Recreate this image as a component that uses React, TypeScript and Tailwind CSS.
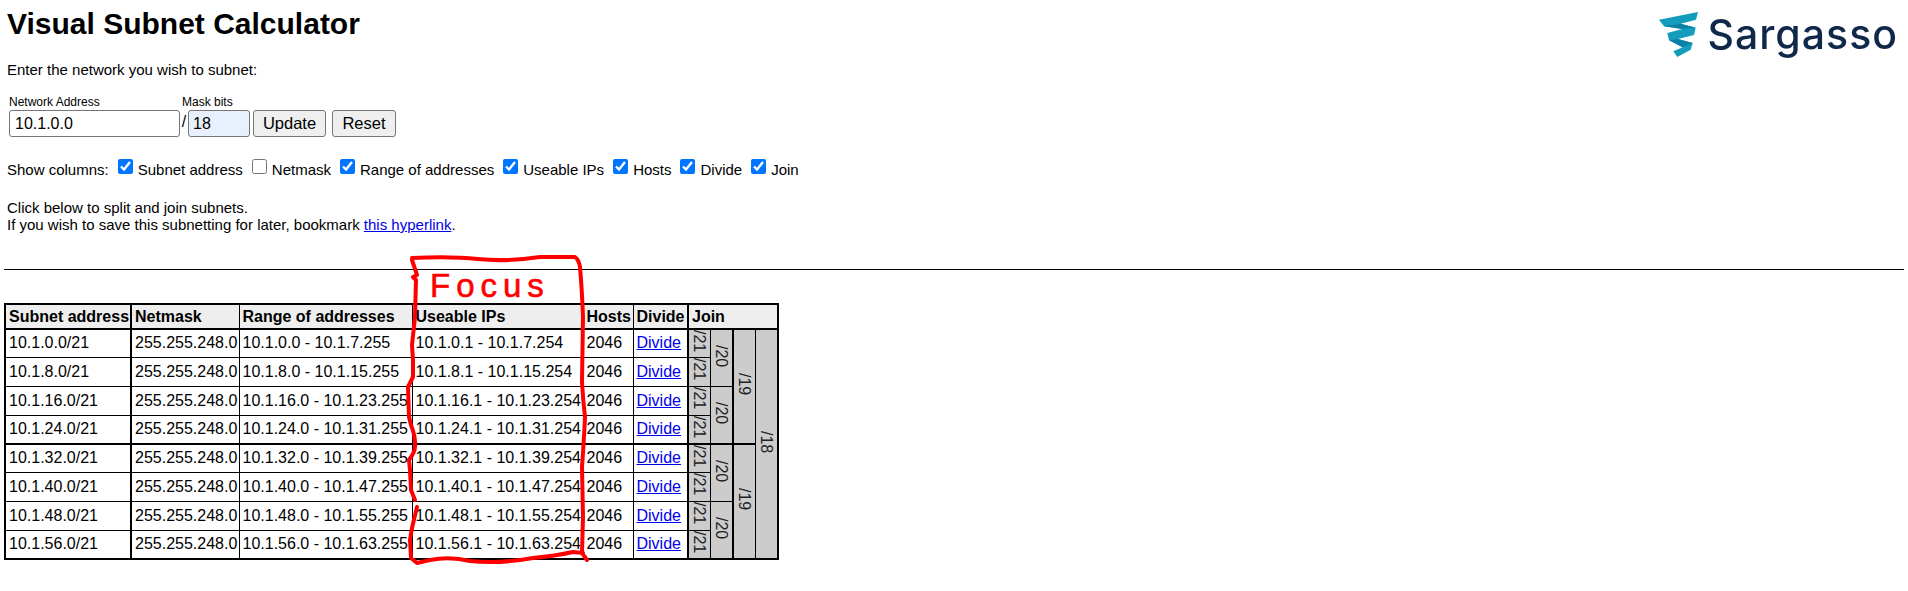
const rows = [
  ["10.1.0.0/21", "10.1.0.0 - 10.1.7.255", "10.1.0.1 - 10.1.7.254"],
  ["10.1.8.0/21", "10.1.8.0 - 10.1.15.255", "10.1.8.1 - 10.1.15.254"],
  ["10.1.16.0/21", "10.1.16.0 - 10.1.23.255", "10.1.16.1 - 10.1.23.254"],
  ["10.1.24.0/21", "10.1.24.0 - 10.1.31.255", "10.1.24.1 - 10.1.31.254"],
  ["10.1.32.0/21", "10.1.32.0 - 10.1.39.255", "10.1.32.1 - 10.1.39.254"],
  ["10.1.40.0/21", "10.1.40.0 - 10.1.47.255", "10.1.40.1 - 10.1.47.254"],
  ["10.1.48.0/21", "10.1.48.0 - 10.1.55.255", "10.1.48.1 - 10.1.55.254"],
  ["10.1.56.0/21", "10.1.56.0 - 10.1.63.255", "10.1.56.1 - 10.1.63.254"],
];

const columns: [string, boolean][] = [
  ["Subnet address", true],
  ["Netmask", false],
  ["Range of addresses", true],
  ["Useable IPs", true],
  ["Hosts", true],
  ["Divide", true],
  ["Join", true],
];

function Join({ label, span, thickRight, thickBottom }: { label: string; span: number; thickRight?: boolean; thickBottom?: boolean }) {
  return (
    <td
      rowSpan={span}
      className={`bg-[#cccccc] border-y border-l border-black p-0 text-center align-middle text-[#222222] ${thickRight ? "border-r-2" : "border-r"} ${thickBottom ? "border-b-2" : ""}`}
    >
      <span className="inline-block [writing-mode:vertical-rl] leading-[20px]">{label}</span>
    </td>
  );
}

function Logo() {
  return (
    <div className="flex items-start gap-[9px] mt-[11px] mr-[6px] blur-[0.4px]">
      <svg width="41" height="49" viewBox="52 34 123 147" aria-hidden="true">
        <polygon points="55,60 172,37 166,60 120,72 165,84 160,106 112,118 156,130 150,150 110,172 98,155 126,143 85,122 80,100 125,88 70,80" fill="#149cbc" />
        <polygon points="70,80 120,72 165,84 125,88" fill="#0a80a5" />
        <polygon points="85,122 112,118 156,130 126,143" fill="#0a80a5" />
      </svg>
      <span className="font-['Inter','Noto_Sans',sans-serif] text-[41px] leading-[46px] font-medium text-[#10284a] tracking-[1px]">Sargasso</span>
    </div>
  );
}

export default function App() {
  return (
    <div className="relative min-h-[591px] bg-white px-[4px] font-['Liberation_Sans',Arial,sans-serif] text-black overflow-hidden">
      <div className="flex justify-between items-start h-[60px]">
        <h1 className="ml-[3px] mt-[6px] text-[30px] leading-[36px] font-bold">Visual Subnet Calculator</h1>
        <Logo />
      </div>

      <p className="ml-[3px] mt-[1px] text-[15px] leading-[17px]">Enter the network you wish to subnet:</p>

      <form className="mt-[17px] ml-[5px] flex items-end">
        <div className="flex flex-col">
          <label className="text-[12px] leading-[14px] mb-[1px]">Network Address</label>
          <input defaultValue="10.1.0.0" className="w-[171px] h-[27px] border border-[#767676] rounded-[3px] px-[5px] text-[16px] outline-none" />
        </div>
        <span className="w-[8px] h-[27px] text-[16px] leading-[24px] text-center">/</span>
        <div className="flex flex-col">
          <label className="text-[12px] leading-[14px] mb-[1px] -ml-[6px]">Mask bits</label>
          <input defaultValue="18" className="w-[62px] h-[27px] border border-[#767676] rounded-[3px] px-[4px] text-[16px] bg-[#e8f0fe] outline-none" />
        </div>
        <button type="button" className="ml-[3px] w-[73px] h-[27px] bg-[#efefef] border border-[#767676] rounded-[3px] text-[16.5px]">Update</button>
        <button type="button" className="ml-[6px] w-[64px] h-[27px] bg-[#efefef] border border-[#767676] rounded-[3px] text-[16.5px]">Reset</button>
      </form>

      <div className="ml-[3px] mt-[22px] flex items-center h-[20px] text-[15px] leading-[17px]">
        <span className="mr-[9px]">Show columns:</span>
        {columns.map(([name, checked]) => (
          <label key={name} className="flex items-center mr-[9px]">
            <input type="checkbox" defaultChecked={checked} className="w-[15px] h-[15px] m-0 mr-[5px] -mt-[5px]" />
            {name}
          </label>
        ))}
      </div>

      <p className="ml-[3px] mt-[20px] text-[15px] leading-[17px]">
        Click below to split and join subnets.
        <br />
        If you wish to save this subnetting for later, bookmark <a href="#" className="text-[#0000ee] underline">this hyperlink</a>.
      </p>

      <hr className="mt-[36px] border-0 border-t border-black" />

      <table className="mt-[33px] table-fixed w-[773px] border-collapse border-2 border-black text-[16px] leading-[18px]">
        <colgroup>
          <col className="w-[126px]" />
          <col className="w-[108px]" />
          <col className="w-[173px]" />
          <col className="w-[171px]" />
          <col className="w-[50px]" />
          <col className="w-[55px]" />
          <col className="w-[22px]" />
          <col className="w-[23px]" />
          <col className="w-[22px]" />
          <col className="w-[23px]" />
        </colgroup>
        <thead>
          <tr className="h-[25px] bg-[#eeeeee] font-bold">
            <th className="border border-r-2 border-b-2 border-black px-[3px] p-0 text-left whitespace-nowrap font-bold">Subnet address</th>
            <th className="border border-b-2 border-black px-[3px] text-left font-bold">Netmask</th>
            <th className="border border-b-2 border-black px-[3px] text-left font-bold">Range of addresses</th>
            <th className="border border-b-2 border-black px-[3px] text-left font-bold">Useable IPs</th>
            <th className="border border-b-2 border-black px-[3px] text-left font-bold">Hosts</th>
            <th className="border border-r-2 border-b-2 border-black px-[3px] text-left font-bold">Divide</th>
            <th colSpan={4} className="border border-b-2 border-black px-[3px] text-left font-bold">Join</th>
          </tr>
        </thead>
        <tbody>
          {rows.map(([subnet, range, usable], i) => (
            <tr key={subnet} className={i === 0 || i === 4 ? "h-[28px]" : "h-[29px]"}>
              <td className={`border border-r-2 border-black px-[3px] whitespace-nowrap ${i === 3 ? "border-b-2" : ""}`}>{subnet}</td>
              <td className={`border border-black px-[3px] whitespace-nowrap ${i === 3 ? "border-b-2" : ""}`}>255.255.248.0</td>
              <td className={`border border-black px-[3px] whitespace-nowrap ${i === 3 ? "border-b-2" : ""}`}>{range}</td>
              <td className={`border border-black px-[3px] whitespace-nowrap ${i === 3 ? "border-b-2" : ""}`}>{usable}</td>
              <td className={`border border-black px-[3px] ${i === 3 ? "border-b-2" : ""}`}>2046</td>
              <td className={`border border-r-2 border-black px-[3px] ${i === 3 ? "border-b-2" : ""}`}>
                <a href="#" className="text-[#0000ee] underline">Divide</a>
              </td>
              <Join label="/21" span={1} thickBottom={i === 3} />
              {i % 2 === 0 && <Join label="/20" span={2} thickRight thickBottom={i === 2} />}
              {i % 4 === 0 && <Join label="/19" span={4} thickBottom={i === 0} />}
              {i === 0 && <Join label="/18" span={8} />}
            </tr>
          ))}
        </tbody>
      </table>

      <svg className="absolute left-0 top-0 pointer-events-none" width="1908" height="591" viewBox="0 0 1908 591" fill="none" aria-hidden="true">
        <path
          d="M412 258 Q450 256 478 259 Q505 262 540 257 L575 257 Q579 260 580 267 Q582 290 583 317 L582 382 Q583 400 585 417 Q584 440 582 467 L583 517 L582 553 L587 560 M583 553 L573 552 Q555 556 533 558 Q500 564 470 561 Q450 556 430 560 L417 563 L411 558 L410 540 L412 528 L417 507 M415 500 L411 490 L410 470 L409 460 Q415 452 415 447 Q416 438 411 425 L409 417 L408 387 L413 377 L413 360 L412 345 L415 317 L416 280 L413 277 L417 275 L412 260"
          stroke="#ff0000"
          strokeWidth="4"
          strokeLinejoin="round"
          strokeLinecap="round"
        />
      </svg>
      <span className="absolute left-[430px] top-[267px] text-[33px] leading-[38px] tracking-[6px] text-[#ff0000] [-webkit-text-stroke:0.6px_#ff0000]">Focus</span>
    </div>
  );
}
